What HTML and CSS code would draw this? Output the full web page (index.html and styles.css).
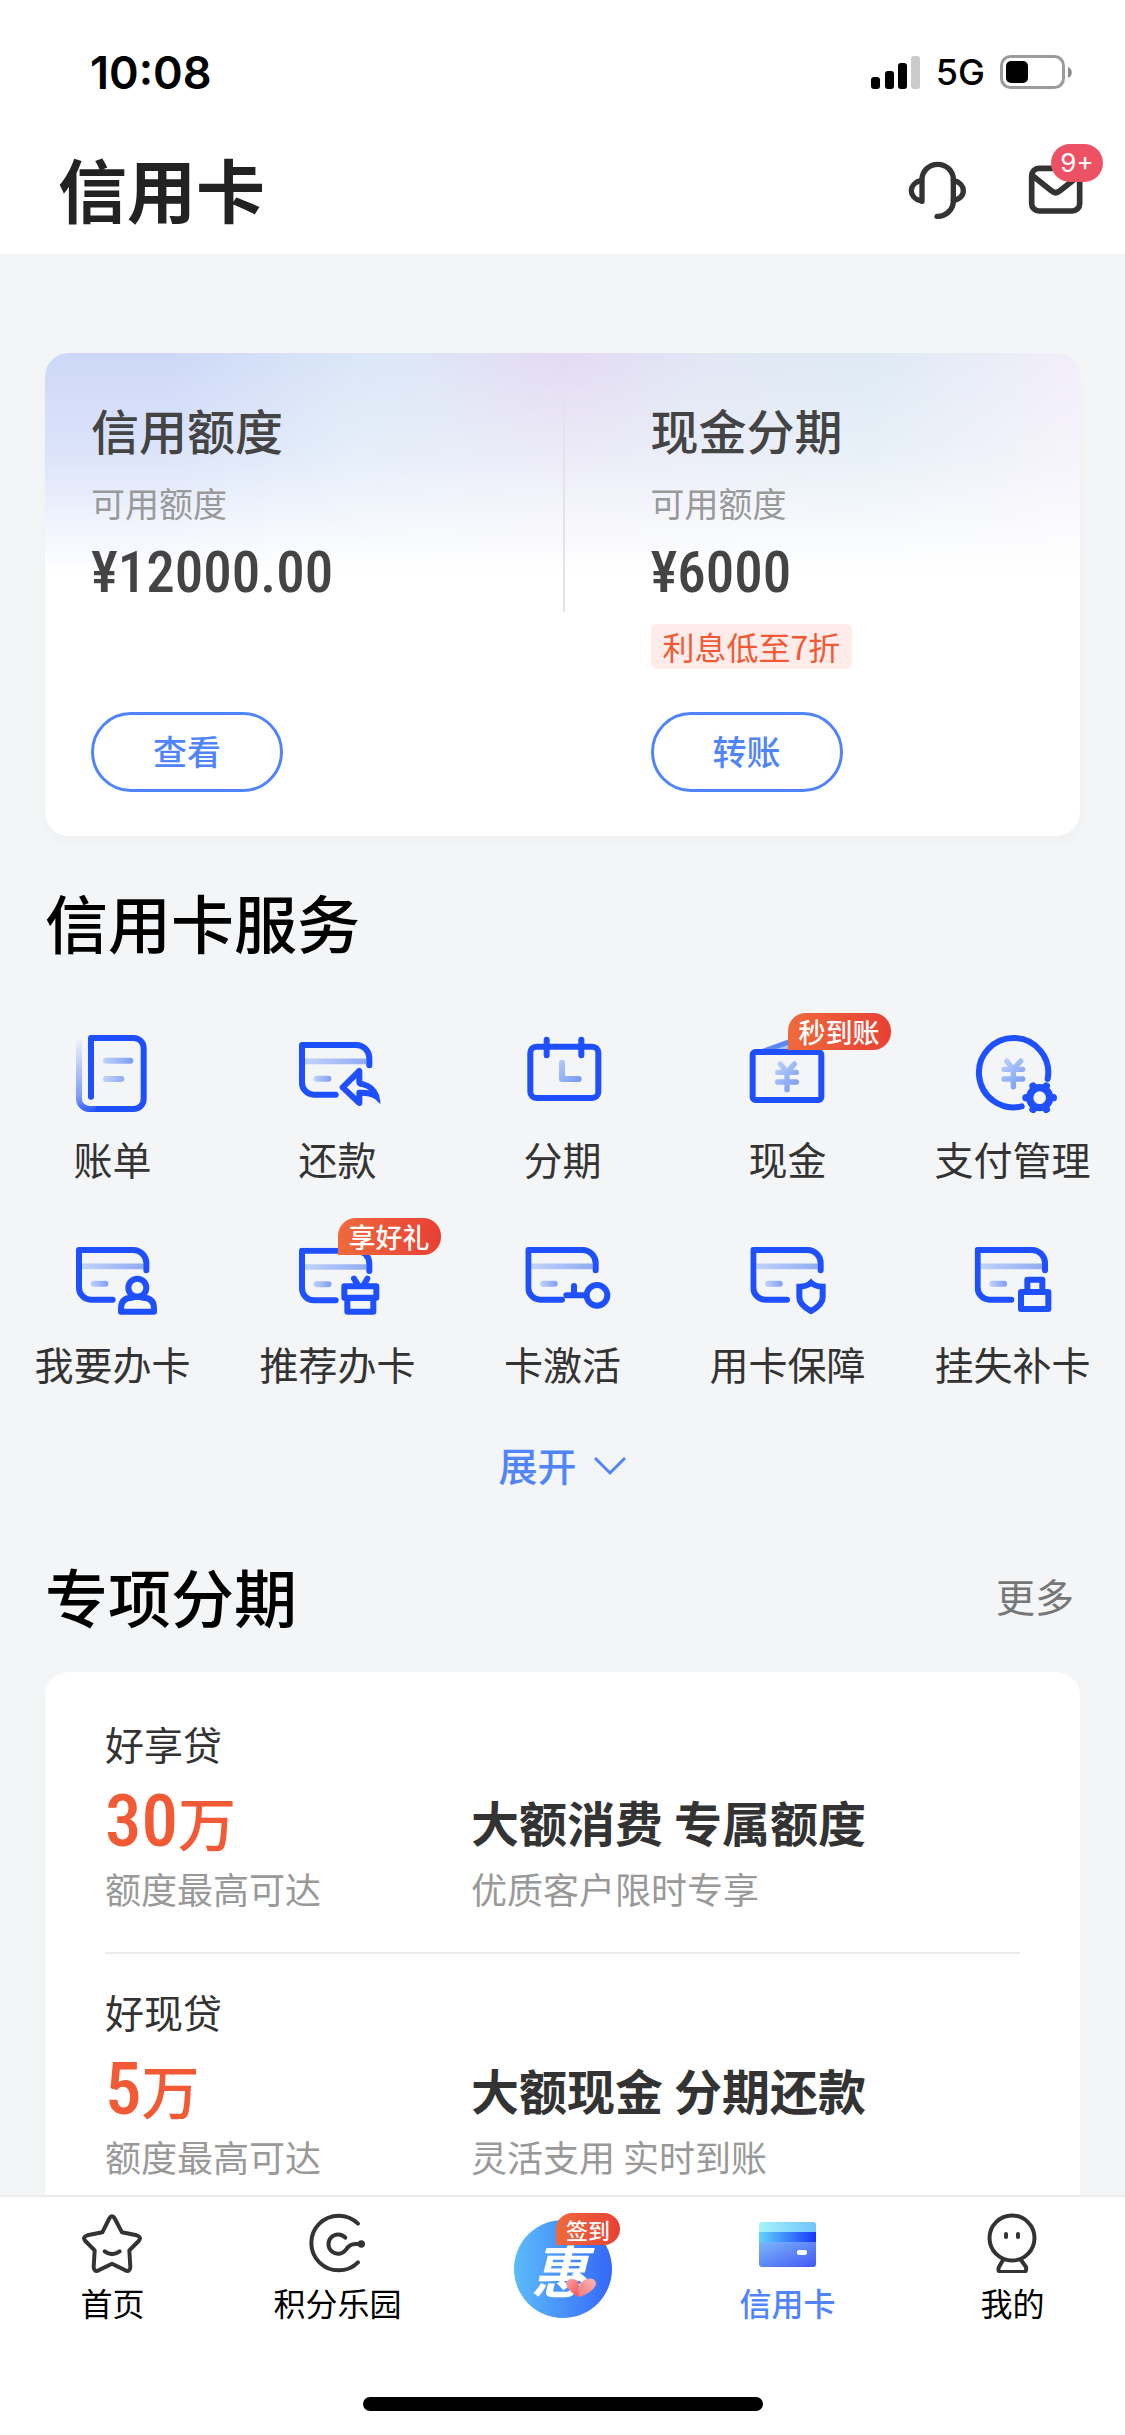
FILE: index.html
```html
<!DOCTYPE html>
<html lang="zh-CN">
<head>
<meta charset="utf-8">
<meta name="viewport" content="width=device-width, initial-scale=1">
<title>信用卡</title>
<link rel="stylesheet" href="styles.css">
</head>
<body>
<svg class="defs" aria-hidden="true">
  <defs>
    <linearGradient id="soft" gradientUnits="userSpaceOnUse" x1="110" y1="100" x2="200" y2="190">
      <stop offset="0" stop-color="#c9d9fb"/><stop offset="1" stop-color="#6f96f3"/>
    </linearGradient>
    <linearGradient id="line" gradientUnits="userSpaceOnUse" x1="20" y1="0" x2="210" y2="0">
      <stop offset="0" stop-color="#c0d2fa"/><stop offset="1" stop-color="#8faaf2"/>
    </linearGradient>
    <linearGradient id="dash" gradientUnits="userSpaceOnUse" x1="44" y1="0" x2="98" y2="0">
      <stop offset="0" stop-color="#c0d2fa"/><stop offset="1" stop-color="#7c9ef3"/>
    </linearGradient>
    <linearGradient id="text-line" gradientUnits="userSpaceOnUse" x1="124" y1="0" x2="212" y2="0">
      <stop offset="0" stop-color="#c0d2fa"/><stop offset="1" stop-color="#7c9ef3"/>
    </linearGradient>
    <linearGradient id="spine" gradientUnits="userSpaceOnUse" x1="50" y1="40" x2="112" y2="262">
      <stop offset="0" stop-color="#1f50ff" stop-opacity="0"/><stop offset=".75" stop-color="#1f50ff" stop-opacity=".55"/><stop offset="1" stop-color="#1f50ff"/>
    </linearGradient>
    <symbol id="card" viewBox="0 0 240 180">
      <path d="M18 58H202" stroke="url(#line)" stroke-width="17"/>
      <path d="M53 110H88.1" stroke="url(#dash)" stroke-width="18" stroke-linecap="round"/>
      <path d="M211 70V48a39 39 0 0 0-39-39H9V122a36 36 0 0 0 36 36H110" class="stroke"/>
    </symbol>
    <symbol id="yen" viewBox="0 0 300 300">
      <path d="M130 120L150 145L172 120M150 145V197M122 145H178M122 174H178" fill="none" stroke="url(#soft)" stroke-width="16" stroke-linecap="round" stroke-linejoin="round"/>
    </symbol>
    <linearGradient id="wallet-top" x1="0" x2="1" y1="0" y2="0"><stop offset="0" stop-color="#a6f2f8"/><stop offset="1" stop-color="#6fc4fc"/></linearGradient>
    <linearGradient id="wallet-mid" x1="0" x2="1" y1="0" y2="0"><stop offset="0" stop-color="#62d2fb"/><stop offset="1" stop-color="#1637fa"/></linearGradient>
    <linearGradient id="wallet-body" x1="0" x2="1" y1="0" y2="1"><stop offset="0" stop-color="#7cb8fb"/><stop offset="1" stop-color="#4257f5"/></linearGradient>
    <linearGradient id="heart-l" x1="0" x2="1" y1="0" y2="1"><stop offset="0" stop-color="#f9a5a5"/><stop offset="1" stop-color="#ee5257"/></linearGradient>
    <linearGradient id="heart-r" x1="1" x2="0" y1="0" y2="1"><stop offset="0" stop-color="#fbb9b4"/><stop offset="1" stop-color="#f2777b"/></linearGradient>
  </defs>
</svg>

<div class="status">
  <span class="status-time">10:08</span>
  <div class="status-right">
    <svg class="signal" viewBox="0 0 50 34" aria-hidden="true">
      <rect x="0" y="22" width="9" height="12" rx="3"/><rect x="14" y="16" width="9" height="18" rx="3"/><rect x="27" y="8" width="9" height="26" rx="3"/><rect x="40" y="1" width="9" height="33" rx="3" fill="#cbcbcb"/>
    </svg>
    <span class="status-net">5G</span>
    <svg class="battery" viewBox="0 0 72 34" aria-hidden="true">
      <rect x="1.5" y="1.5" width="62" height="31" rx="9" fill="none" stroke="#9b9b9b" stroke-width="3"/><rect x="6" y="6" width="22" height="22" rx="5"/><path d="M68 12c5 2 5 9 0 11z" fill="#8a8a8a"/>
    </svg>
  </div>
</div>

<header class="header">
  <h1 class="header-title">信用卡</h1>
  <div class="header-actions">
    <button class="icon-button" type="button" aria-label="客服">
      <svg viewBox="172 360 180 180"><g fill="none" stroke="#333" stroke-width="16" stroke-linecap="round" stroke-linejoin="round"><path d="M217 484V418a47 45 0 0 1 94 0V482a47 47 0 0 1-49 47"/><path d="M215 421C175 430 175 475 215 483M311 421C351 430 351 475 311 481"/></g></svg>
    </button>
    <button class="icon-button" type="button" aria-label="消息">
      <svg viewBox="528 360 180 180"><g fill="none" stroke="#333" stroke-width="17" stroke-linejoin="round"><rect x="545" y="385" width="144" height="128" rx="22"/><path d="M549 408L604 452Q617 464 630 452L686 408"/></g></svg>
      <span class="count">9+</span>
    </button>
  </div>
</header>

<main class="main">
  <section class="quota">
    <div class="quota-col">
      <h2 class="quota-title">信用额度</h2>
      <p class="quota-sub">可用额度</p>
      <p class="quota-amount">¥12000.00</p>
      <button class="pill" type="button">查看</button>
    </div>
    <div class="quota-col">
      <h2 class="quota-title">现金分期</h2>
      <p class="quota-sub">可用额度</p>
      <p class="quota-amount">¥6000</p>
      <span class="tag">利息低至7折</span>
      <button class="pill" type="button">转账</button>
    </div>
  </section>

  <div class="section-head"><h2 class="section-title">信用卡服务</h2></div>
  <nav class="services" aria-label="信用卡服务">
    <a class="service" href="#bill">
      <svg class="service-icon" viewBox="0 0 300 300"><path d="M132 110H205.1M132 165H178.1" stroke="url(#text-line)" stroke-width="18" stroke-linecap="round"/><path d="M110 255H82a31 31 0 0 1-31-31V45" fill="none" stroke="url(#spine)" stroke-width="18" stroke-linecap="round"/><path class="stroke" d="M87 218V42H215a30 30 0 0 1 30 30V225a30 30 0 0 1-30 30H110"/></svg>
      <span>账单</span>
    </a>
    <a class="service" href="#repay">
      <svg class="service-icon" viewBox="0 0 300 300"><use href="#card" x="36" y="54" width="240" height="180"/><path class="stroke" d="M167 190L217 141V175Q217 180 229 181Q258 188 268 217Q250 205 217 206V237Z"/><path d="M256 190Q282 212 280 241Q264 222 245 212Z" fill="#1f50ff"/></svg>
      <span>还款</span>
    </a>
    <a class="service" href="#installment">
      <svg class="service-icon" viewBox="0 0 300 300"><rect class="stroke" x="55" y="68" width="204" height="154" rx="18"/><path class="stroke" d="M104 47V94M208 47V94"/><path d="M150 116V165H200" fill="none" stroke="url(#soft)" stroke-width="18" stroke-linecap="round" stroke-linejoin="round"/></svg>
      <span>分期</span>
    </a>
    <a class="service" href="#cash">
      <svg class="service-icon" viewBox="0 0 300 300"><path d="M66 78L160 44L250 76Z" fill="#5b87f6"/><path d="M110 78L160 60V78Z" fill="#a9c1fa"/><rect class="stroke" x="47" y="84" width="206" height="144" rx="8"/><use href="#yen" width="300" height="300"/></svg>
      <span>现金</span><em class="flag">秒到账</em>
    </a>
    <a class="service" href="#payment">
      <svg class="service-icon" viewBox="0 0 300 300"><path class="stroke" d="M257 165A104 104 0 1 0 179 247"/><use href="#yen" x="4" y="-9" width="300" height="300"/><circle class="stroke gear" cx="233" cy="221" r="30"/><path class="stroke gear" d="M269 221H274M197 221H192M251 252L253 256M215 252L213 256M251 190L253 186M215 190L213 186"/></svg>
      <span>支付管理</span>
    </a>
    <a class="service" href="#apply">
      <svg class="service-icon" viewBox="0 0 300 300"><use href="#card" x="42" y="54" width="240" height="180"/><circle class="stroke" cx="226" cy="176" r="27"/><path class="stroke" d="M177 248V238Q177 206 210 206Q226 200 243 206Q276 206 276 238V248Z"/></svg>
      <span>我要办卡</span>
    </a>
    <a class="service" href="#recommend">
      <svg class="service-icon" viewBox="0 0 300 300"><use href="#card" x="36" y="56" width="240" height="180"/><path class="stroke" d="M172 172H268V206H172ZM181 207H259V248H181ZM201 149L214 170M241 149L229 170"/></svg>
      <span>推荐办卡</span><em class="flag">享好礼</em>
    </a>
    <a class="service" href="#activate">
      <svg class="service-icon" viewBox="0 0 300 300"><use href="#card" x="40" y="54" width="240" height="180"/><circle class="stroke" cx="255" cy="199" r="31"/><path class="stroke" d="M163 199H222M186 171V199"/></svg>
      <span>卡激活</span>
    </a>
    <a class="service" href="#protect">
      <svg class="service-icon" viewBox="0 0 300 300"><use href="#card" x="40" y="54" width="240" height="180"/><path class="stroke miter" d="M222 161Q235 173 257 173V205Q257 228 222 246Q187 228 187 205V173Q209 173 222 161Z"/></svg>
      <span>用卡保障</span>
    </a>
    <a class="service" href="#lost">
      <svg class="service-icon" viewBox="0 0 300 300"><use href="#card" x="38" y="54" width="240" height="180"/><path class="stroke" d="M196 189V152H241V189M177 189H259V240H177Z"/></svg>
      <span>挂失补卡</span>
    </a>
  </nav>
  <button class="expand" type="button">展开
    <svg viewBox="0 0 34 20" aria-hidden="true"><path d="M2 2L17 17L32 2" fill="none" stroke="#4f84fb" stroke-width="3"/></svg>
  </button>

  <div class="section-head loans-head"><h2 class="section-title">专项分期</h2><a class="more" href="#more">更多</a></div>
  <section class="loans">
    <article class="loan">
      <p class="loan-name">好享贷</p>
      <p class="loan-amount">30<small>万</small></p>
      <h3 class="loan-title">大额消费 专属额度</h3>
      <p class="loan-note">额度最高可达</p>
      <p class="loan-note">优质客户限时专享</p>
    </article>
    <article class="loan">
      <p class="loan-name">好现贷</p>
      <p class="loan-amount">5<small>万</small></p>
      <h3 class="loan-title">大额现金 分期还款</h3>
      <p class="loan-note">额度最高可达</p>
      <p class="loan-note">灵活支用 实时到账</p>
    </article>
  </section>
</main>

<footer class="tabbar">
  <nav class="tabs" aria-label="主导航">
    <a class="tab" href="#home">
      <svg class="tab-icon" viewBox="247 96 180 180"><g fill="none" stroke="#333" stroke-width="12" stroke-linecap="round" stroke-linejoin="round"><path d="M308 154L328 114Q337 98 346 114L367 154L411 163Q427 168 417 180L389 208L392 258Q391 274 377 268L337 248L297 268Q283 274 282 258L285 208L257 180Q247 168 263 163Z"/><path d="M315 211Q337 228 360 211"/></g></svg>
      <span>首页</span>
    </a>
    <a class="tab" href="#points">
      <svg class="tab-icon" viewBox="923 102 180 180"><g fill="none" stroke="#333" stroke-width="12" stroke-linecap="round"><path d="M1076 134A82 82 0 1 0 1076 250"/><path d="M1038 176A29 29 0 1 0 1040 212Q1050 195 1068 195H1084"/></g><circle cx="1086" cy="195" r="11" fill="#333"/></svg>
      <span>积分乐园</span>
    </a>
    <a class="tab" href="#checkin">
      <span class="hui">惠
        <svg class="heart" viewBox="0 0 30 20"><path d="M13 19C-3 11-2 1 6 1q7 0 7 7z" fill="url(#heart-l)"/><path d="M13 19Q10 8 17 3C24-2 30 1 30 6Q28 14 13 19z" fill="url(#heart-r)"/></svg>
      </span>
      <em class="flag flag-small">签到</em>
    </a>
    <a class="tab tab-active" href="#credit" aria-current="page">
      <svg class="tab-icon" viewBox="0 0 60 60"><path d="M2 12q0-3 3-3H56q3 0 3 3V20H2Z" fill="url(#wallet-top)"/><path d="M2 19H59V30H2Z" fill="url(#wallet-mid)"/><path d="M2 29H59V51q0 3-3 3H5q-3 0-3-3Z" fill="url(#wallet-body)"/><rect x="40" y="37" width="10" height="5" rx="2" fill="#fff"/></svg>
      <span>信用卡</span>
    </a>
    <a class="tab" href="#mine">
      <svg class="tab-icon" viewBox="0 0 60 60"><g fill="none" stroke="#333" stroke-width="4" stroke-linecap="round" stroke-linejoin="round"><circle cx="30" cy="25" r="22.5"/><path d="M21 47L17 54Q15 59 20 59H41Q45 59 44 54L39 47M24 21V24M36 21V24"/></g></svg>
      <span>我的</span>
    </a>
  </nav>
  <div class="home-indicator"></div>
</footer>
</body>
</html>
```
FILE: styles.css
```css
* {
  box-sizing: border-box;
}

body {
  display: flex;
  flex-direction: column;
  height: 100vh;
  margin: 0;
  background: #fff;
  color: #333;
  font-family: "Noto Sans CJK SC", "Liberation Sans", sans-serif;
}

h1, h2, h3, p {
  margin: 0;
}

a {
  color: inherit;
  text-decoration: none;
}

button {
  padding: 0;
  border: 0;
  background: none;
  font-family: inherit;
  cursor: pointer;
}

.defs {
  position: absolute;
  width: 0;
  height: 0;
}

.stroke {
  fill: none;
  stroke: #1f50ff;
  stroke-width: 18;
  stroke-linecap: round;
  stroke-linejoin: round;
}

.miter {
  stroke-linejoin: miter;
}

.gear {
  stroke-width: 22;
}

/* Status bar */
.status {
  display: flex;
  flex: none;
  align-items: center;
  justify-content: space-between;
  height: 126px;
  padding: 18px 53px 0 90px;
  color: #000;
  font-family: Inter, sans-serif;
}

.status-time {
  font-size: 45px;
  font-weight: 600;
}

.status-right {
  display: flex;
  align-items: center;
  gap: 15px;
}

.status-net {
  font-size: 36px;
  font-weight: 500;
}

.signal {
  width: 50px;
  height: 34px;
}

.battery {
  width: 72px;
  height: 34px;
}

/* Header */
.header {
  display: flex;
  flex: none;
  align-items: center;
  justify-content: space-between;
  height: 128px;
  padding: 0 39px 0 58px;
}

.header-title {
  padding-bottom: 4px;
  color: #222;
  font-size: 69px;
  font-weight: 700;
  line-height: 100px;
}

.header-actions {
  display: flex;
  gap: 59px;
}

.icon-button {
  position: relative;
  width: 60px;
  height: 60px;
}

.icon-button svg {
  display: block;
  width: 60px;
  height: 60px;
}

.count {
  position: absolute;
  top: -16px;
  left: 25px;
  width: 52px;
  border-radius: 19px;
  background: #ef5164;
  color: #fff;
  font-family: Inter, sans-serif;
  font-size: 26px;
  line-height: 38px;
  text-align: center;
}

/* Content */
.main {
  flex: 1;
  min-height: 0;
  overflow-y: auto;
  scrollbar-width: none;
  padding: 99px 45px 0;
  background: #f3f5f7;
}

.quota {
  position: relative;
  display: grid;
  grid-template-columns: 1fr 1fr;
  border-radius: 24px;
  background:
    linear-gradient(to bottom, rgba(255, 255, 255, 0) 0, rgba(255, 255, 255, .3) 100px, #fff 220px),
    radial-gradient(circle at 50% 0, #e3daf3 0, rgba(227, 218, 243, 0) 140px),
    linear-gradient(to right, #cdd8f8 0, #cdd8f8 12%, #dae7f7 30%, #e4e4f5 50%, #deeaf4 80%, #f3eefa 100%);
  box-shadow: 0 8px 12px rgba(40, 50, 70, .02);
}

.quota::before {
  content: "";
  position: absolute;
  top: 44px;
  left: 50%;
  width: 2px;
  height: 215px;
  background: #e3e3e8;
}

.quota-col {
  display: flex;
  flex-direction: column;
  align-items: flex-start;
  padding: 46px 44px 44px 46px;
}

.quota-col + .quota-col {
  padding-left: 88px;
}

.quota-title {
  color: #444;
  font-size: 48px;
  font-weight: 500;
  line-height: 60px;
}

.quota-sub {
  margin-top: 20px;
  color: #999;
  font-size: 34px;
  line-height: 48px;
}

.quota-amount {
  margin-top: 16px;
  color: #444;
  font-family: "Roboto Condensed", Roboto, sans-serif;
  font-size: 57px;
  font-weight: 500;
  line-height: 60px;
}

.tag {
  margin: 21px 0 43px;
  padding: 0 12px;
  border-radius: 6px;
  background: #fdecea;
  color: #f15a35;
  font-size: 32px;
  line-height: 45px;
}

.pill {
  width: 192px;
  height: 80px;
  margin-top: auto;
  padding-bottom: 4px;
  border: 3px solid #4f84fb;
  border-radius: 40px;
  color: #4f84fb;
  font-size: 34px;
  font-weight: 500;
}

.section-head {
  display: flex;
  align-items: center;
  justify-content: space-between;
  margin-top: 45px;
}

.section-title {
  color: #000;
  font-size: 63px;
  font-weight: 500;
  line-height: 80px;
}

.services {
  display: grid;
  grid-template-columns: repeat(5, 1fr);
  row-gap: 47px;
  margin: 63px -45px 0;
}

.service {
  position: relative;
  display: flex;
  flex-direction: column;
  align-items: center;
  gap: 10px;
  font-size: 39px;
  line-height: 48px;
  white-space: nowrap;
}

.service-icon {
  width: 100px;
  height: 100px;
  margin-right: 1px;
}

.flag {
  position: absolute;
  top: -11px;
  left: 50%;
  padding: 0 11px;
  border-radius: 18px 18px 18px 0;
  background: linear-gradient(to right, #ee6a3c, #e94035);
  color: #fff;
  font-size: 27px;
  font-style: normal;
  font-weight: 500;
  line-height: 37px;
}

.expand {
  display: flex;
  align-items: center;
  gap: 16px;
  margin: 47px auto 0;
  color: #4f84fb;
  font-size: 39px;
  font-weight: 500;
  line-height: 60px;
}

.expand svg {
  width: 34px;
  height: 20px;
  margin-top: 4px;
}

.loans-head {
  margin-top: 61px;
}

.more {
  padding-right: 6px;
  color: #777;
  font-size: 39px;
}

.loans {
  margin-top: 37px;
  padding: 14px 60px;
  border-radius: 24px;
  background: #fff;
}

.loan {
  display: grid;
  grid-template-columns: 2fr 3fr;
  padding: 33px 0 40px;
}

.loan + .loan {
  border-top: 2px solid #ececee;
}

.loan-name {
  grid-column: 1 / -1;
  margin-bottom: 18px;
  font-size: 39px;
  line-height: 48px;
}

.loan-amount {
  height: 72px;
  color: #f15a35;
  font-family: "Roboto Condensed", Roboto, "Noto Sans CJK SC", sans-serif;
  font-size: 73px;
  font-weight: 500;
  line-height: 72px;
}

.loan-amount small {
  font-size: 58px;
  line-height: 58px;
}

.loan-title {
  font-size: 48px;
  font-weight: 700;
  line-height: 72px;
}

.loan-note {
  margin-top: 7px;
  color: #999;
  font-size: 36px;
  line-height: 48px;
}

/* Tab bar */
.tabbar {
  flex: none;
  padding: 16px 0 24px;
  border-top: 2px solid #ececee;
  background: #fff;
}

.tabs {
  display: grid;
  grid-template-columns: repeat(5, 1fr);
}

.tab {
  position: relative;
  display: flex;
  flex-direction: column;
  align-items: center;
  gap: 9px;
  color: #000;
  font-size: 32px;
  line-height: 40px;
}

.tab-active {
  color: #4f84fb;
  font-weight: 500;
}

.tab-icon {
  width: 60px;
  height: 60px;
  margin-right: 1px;
}

.hui {
  position: relative;
  width: 98px;
  height: 98px;
  margin-top: 7px;
  padding: 21px 6px 0 0;
  border-radius: 50%;
  background: linear-gradient(to right, #5cbcfa, #3568f8);
  color: #fff;
  font-size: 56px;
  font-style: italic;
  font-weight: 700;
  line-height: 56px;
  text-align: center;
}

.heart {
  position: absolute;
  right: 15px;
  bottom: 20px;
  width: 32px;
  height: 20px;
}

.flag-small {
  top: 0;
  left: 106px;
  padding: 0 10px;
  border-radius: 16px 16px 16px 0;
  font-size: 22px;
  line-height: 32px;
}

.home-indicator {
  width: 400px;
  height: 14px;
  margin: 75px auto 0;
  border-radius: 7px;
  background: #000;
}
```
